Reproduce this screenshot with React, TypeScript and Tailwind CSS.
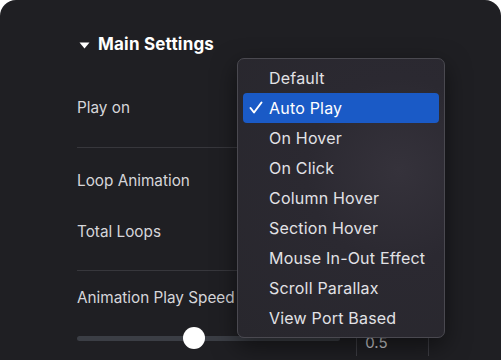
import { useState } from "react";

const options = [
  "Default",
  "Auto Play",
  "On Hover",
  "On Click",
  "Column Hover",
  "Section Hover",
  "Mouse In-Out Effect",
  "Scroll Parallax",
  "View Port Based",
];

const App = () => {
  const [selected, setSelected] = useState<string>("Auto Play");

  return (
    <div className="w-[501px] h-[360px] bg-white font-['Inter',sans-serif] overflow-hidden">
      <div className="relative w-full h-full bg-[#1f1f23] rounded-t-[16px] overflow-hidden">
        <div className="pl-[77px] pr-[72px] pt-[34px]">
          {/* Heading */}
          <div className="h-[22px] flex items-center gap-[8px]">
            <svg width="11" height="7" viewBox="0 0 11 7" className="ml-[2px]">
              <path d="M0.5 0.5 L10.5 0.5 L5.5 6.5 Z" fill="#ffffff" />
            </svg>
            <span className="text-[17px] font-bold text-white tracking-[0.2px]">Main Settings</span>
          </div>

          {/* Play on */}
          <div className="mt-[41px] h-[22px] flex items-center text-[15.3px] text-[#d6d6da]">Play on</div>
          <div className="mt-[28px] h-px bg-[#37373c]" />

          {/* Loop */}
          <div className="mt-[22px] h-[22px] flex items-center text-[15.3px] text-[#d6d6da]">Loop Animation</div>
          <div className="mt-[29px] h-[22px] flex items-center text-[15.3px] text-[#d6d6da]">Total Loops</div>
          <div className="mt-[27px] h-px bg-[#37373c]" />

          {/* Speed */}
          <div className="mt-[16px] h-[22px] flex items-center text-[15.3px] text-[#d6d6da]">Animation Play Speed</div>
          <div className="mt-[18px] flex items-start">
            <div className="relative w-[264px] h-[22px] flex items-center">
              <div className="w-full h-[5px] rounded-full bg-[#3b3e45]" />
              <div className="absolute left-[106px] top-0 w-[22px] h-[22px] rounded-full bg-white" />
            </div>
            <div className="ml-[16px] mt-[-8px] w-[73px] h-[37px] border-x border-[#3d3d43] flex items-end pb-[2px] pl-[8px] text-[15px] text-[#c8c8cc]">
              0.5
            </div>
          </div>
        </div>

        {/* Dropdown menu */}
        <div className="absolute left-[237px] top-[58px] w-[208px] h-[280px] rounded-[7px] border border-[#4a4950] bg-[radial-gradient(circle_at_78%_40%,#35323b_0%,#2b2931_40%,#28272d_100%)] shadow-[0_8px_24px_rgba(0,0,0,0.5)] py-[4px] px-[5px]">
          {options.map((option) => (
            <div
              key={option}
              onClick={() => setSelected(option)}
              className={`relative h-[30px] flex items-center pl-[26px] rounded-[4px] text-[16px] tracking-[0.2px] ${
                selected === option ? "bg-[#1a5ac6] text-white" : "text-[#e2e2e6]"
              }`}
            >
              {selected === option && (
                <svg width="14" height="13" viewBox="0 0 14 13" className="absolute left-[6px] top-[8px]">
                  <path d="M1.5 7 L5 11.5 L12.5 1.5" stroke="#ffffff" strokeWidth="2" fill="none" strokeLinecap="round" strokeLinejoin="round" />
                </svg>
              )}
              {option}
            </div>
          ))}
        </div>
      </div>
    </div>
  );
};

export default App;
